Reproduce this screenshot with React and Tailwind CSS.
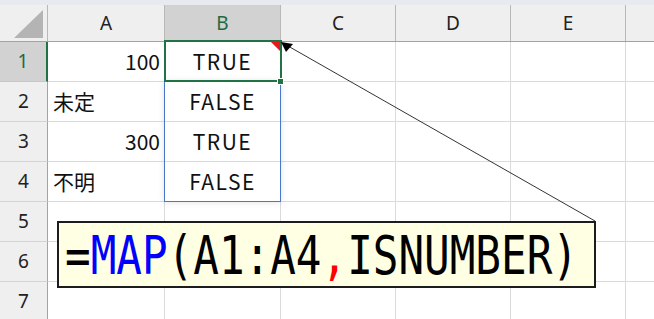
import React from 'react';

const cols = [
  { key: 'A', w: 'w-[117px]' },
  { key: 'B', w: 'w-[116px]' },
  { key: 'C', w: 'w-[115px]' },
  { key: 'D', w: 'w-[115px]' },
  { key: 'E', w: 'w-[115px]' },
];

// contenido de las celdas A y B
const rows = [
  { n: 1, a: '100', aAlign: 'right', b: 'TRUE' },
  { n: 2, a: '未定', aAlign: 'left', b: 'FALSE' },
  { n: 3, a: '300', aAlign: 'right', b: 'TRUE' },
  { n: 4, a: '不明', aAlign: 'left', b: 'FALSE' },
  { n: 5 },
  { n: 6 },
  { n: 7 },
];

const cellFont = { fontFamily: '"Noto Sans CJK JP", "Noto Sans", sans-serif' };
const hdrFont = { fontFamily: '"Noto Sans", "Open Sans", sans-serif' };

const HeaderRow = () => (
  <div className="flex h-[37px] bg-[#efefef] border-b border-[#a3a3a3]">
    <div className="w-[48px] shrink-0 border-r border-[#b8b8b8] flex items-end justify-end pr-[3px] pb-[3px]">
      <svg width="30" height="28" viewBox="0 0 30 28">
        <polygon points="29,0 29,28 0,28" fill="#b4b4b4" />
      </svg>
    </div>
    {cols.map(c => (
      <div
        key={c.key}
        className={`${c.w} shrink-0 border-r border-[#b8b8b8] flex items-center justify-center text-[19px] ${c.key === 'B' ? 'bg-[#d2d2d2] text-[#1d6b3f]' : 'text-[#222]'}`}
        style={hdrFont}
      >
        {c.key}
      </div>
    ))}
    <div className="flex-1" />
  </div>
);

const Row = ({ r }) => (
  <div className="flex h-[40px]">
    <div
      className={`w-[48px] shrink-0 border-r border-b flex items-center justify-center text-[19px] ${r.n === 1 ? 'bg-[#d2d2d2] text-[#1d6b3f] border-r-[#217346] border-r-2 border-b-[#c6c6c6]' : 'bg-[#efefef] text-[#222] border-r-[#a3a3a3] border-b-[#d4d4d4]'}`}
      style={hdrFont}
    >
      {r.n}
    </div>
    <div
      className={`w-[117px] shrink-0 border-r border-b border-[#dadada] flex items-center text-[21px] text-[#111] ${r.aAlign === 'right' ? 'justify-end pr-[4px]' : 'justify-start pl-[5px]'}`}
      style={cellFont}
    >
      {r.a}
    </div>
    <div
      className="w-[116px] shrink-0 border-r border-b border-[#dadada] flex items-center justify-center text-[21px] text-[#111] tracking-[1.5px]"
      style={cellFont}
    >
      {r.b}
    </div>
    <div className="w-[115px] shrink-0 border-r border-b border-[#dadada]" />
    <div className="w-[115px] shrink-0 border-r border-b border-[#dadada]" />
    <div className="w-[115px] shrink-0 border-r border-b border-[#dadada]" />
    <div className="flex-1 border-b border-[#dadada]" />
  </div>
);

export default function App() {
  return (
    <div className="w-[654px] h-[319px] overflow-hidden bg-white relative">
      <div className="h-[5px] bg-[#e7ebef]" />
      <HeaderRow />
      {rows.map(r => <Row key={r.n} r={r} />)}

      {/* rango derramado B2:B4 */}
      <div className="absolute left-[164px] top-[81px] w-[117px] h-[121px] border border-[#4a78c8] shadow-[0_0_6px_rgba(0,0,0,0.12)]" />

      {/* celda activa B1 */}
      <div className="absolute left-[164px] top-[40px] w-[118px] h-[42px] border-2 border-[#217346]" />
      <svg className="absolute left-[271px] top-[42px]" width="9" height="9" viewBox="0 0 9 9">
        <polygon points="0,0 9,0 9,9" fill="#e8191a" />
      </svg>
      <div className="absolute left-[277px] top-[78px] w-[7px] h-[7px] bg-[#217346] border border-white" />

      {/* flecha de la nota */}
      <svg className="absolute left-0 top-0 pointer-events-none" width="654" height="319">
        <line x1="595" y1="221" x2="288" y2="46" stroke="#333" strokeWidth="1" />
        <polygon points="281,42 293,44 286,52" fill="#000" />
      </svg>

      {/* caja con la fórmula */}
      <div className="absolute left-[57px] top-[221px] w-[539px] h-[67px] bg-[#ffffe3] border-2 border-[#1c1c1c] flex items-center pl-[6px] overflow-hidden">
        <div
          className="text-[42.6px] leading-none text-black scale-y-[1.24] translate-y-[1px] whitespace-pre"
          style={{ fontFamily: '"DejaVu Sans Mono", "Liberation Mono", monospace' }}
        >
          =<span className="text-[#0000ff]">MAP</span>(A1:A4<span className="text-[#ff0000]">,</span>ISNUMBER)
        </div>
      </div>
    </div>
  );
}
